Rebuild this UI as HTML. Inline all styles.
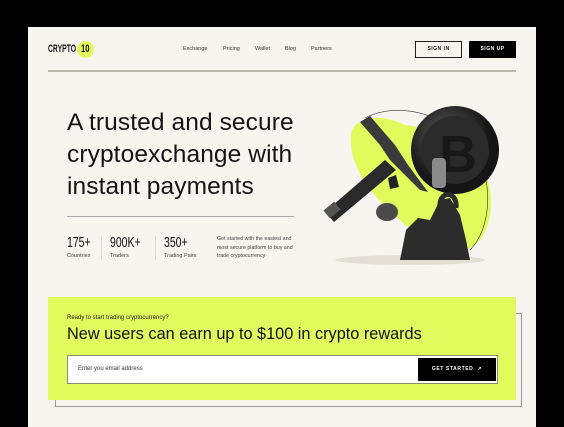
<!DOCTYPE html>
<html><head><style>
*{margin:0;padding:0;box-sizing:border-box}
body{width:564px;height:423px;background:#000;position:relative;overflow:hidden;font-family:"Liberation Sans",sans-serif;color:#111}
.card{position:absolute;left:28px;top:27px;width:508px;height:400px;background:#f7f5f0}
.abs{position:absolute}
.cond{font-family:"Liberation Sans",sans-serif;transform-origin:left;white-space:nowrap}
</style></head><body>
<div class="card"></div>
<div class="abs cond" style="left:48px;top:43px;font-size:11px;font-weight:bold;transform:scaleX(.62)">CRYPTO</div>
<div class="abs" style="left:77px;top:41px;width:17px;height:17px;border-radius:50%;background:#e3fb5f"></div>
<div class="abs cond" style="left:81px;top:43px;font-size:11px;font-weight:bold;transform:scaleX(.7)">10</div>
<div class="abs" style="left:183px;top:46px;font-size:5.5px;color:#333">
<span style="position:absolute;left:0">Exchange</span><span style="position:absolute;left:40px">Pricing</span><span style="position:absolute;left:72px">Wallet</span><span style="position:absolute;left:102px">Blog</span><span style="position:absolute;left:128px">Partners</span></div>
<div class="abs" style="left:415px;top:41px;width:47px;height:17px;border:1px solid #222;font-size:5px;font-weight:bold;text-align:center;line-height:15px;letter-spacing:.5px">SIGN IN</div>
<div class="abs" style="left:469px;top:41px;width:47px;height:17px;background:#000;color:#fff;font-size:5px;font-weight:bold;text-align:center;line-height:17px;letter-spacing:.5px">SIGN UP</div>
<div class="abs" style="left:48px;top:70px;width:468px;height:1.5px;background:#bbb8b0"></div>

<div class="abs" style="left:67px;top:107px;font-size:24.5px;line-height:32px;color:#151515;letter-spacing:.1px">A trusted and secure<br>cryptoexchange with<br>instant payments</div>
<div class="abs" style="left:67px;top:216px;width:227px;height:1px;background:#aaa"></div>

<div class="abs cond" style="left:67px;top:234px;font-size:15px;transform:scaleX(.7)">175+</div>
<div class="abs" style="left:67px;top:253px;font-size:5.5px;color:#444">Countries</div>
<div class="abs" style="left:101px;top:236px;width:1px;height:24px;background:#ddd"></div>
<div class="abs cond" style="left:110px;top:234px;font-size:15px;transform:scaleX(.7)">900K+</div>
<div class="abs" style="left:110px;top:253px;font-size:5.5px;color:#444">Traders</div>
<div class="abs" style="left:155px;top:236px;width:1px;height:24px;background:#ddd"></div>
<div class="abs cond" style="left:164px;top:234px;font-size:15px;transform:scaleX(.7)">350+</div>
<div class="abs" style="left:164px;top:253px;font-size:5.5px;color:#444">Trading Pairs</div>
<div class="abs" style="left:217px;top:235px;font-size:5.3px;line-height:8.7px;color:#444;width:85px">Get started with the easiest and most secure platform to buy and trade cryptocurrency</div>

<svg class="abs" style="left:300px;top:90px" width="220" height="180" viewBox="0 0 220 180">
<defs><radialGradient id="g" cx="40%" cy="35%"><stop offset="0" stop-color="#5a5a5a"/><stop offset="1" stop-color="#151515"/></radialGradient></defs>
<ellipse cx="110" cy="170" rx="75" ry="5" fill="#e2ded6"/>
<path d="M52 40 C60 25 85 25 105 35 C150 40 185 60 190 100 C195 135 180 160 160 160 C130 160 110 140 95 125 C70 105 45 70 52 40Z" fill="#e1fb5c"/>
<path d="M65 28 C100 10 150 25 175 60 C195 95 190 140 170 160" fill="none" stroke="#333" stroke-width=".6"/>
<path d="M60 32 L70 26 L95 55 L108 75 L128 102 L120 100 L90 70 L80 55Z" fill="#3a3a3a"/>
<path d="M25 122 L85 70 L96 80 L34 132Z" fill="#2a2a2a"/>
<rect x="25" y="115" width="14" height="10" transform="rotate(-40 32 120)" fill="#555"/>
<circle cx="155" cy="60" r="44" fill="url(#g)"/>
<circle cx="155" cy="60" r="34" fill="#2a2a2a"/>
<text x="158" y="82" text-anchor="middle" font-size="52" font-weight="bold" fill="#181818">B</text>
<rect x="132" y="68" width="14" height="30" rx="4" fill="#8a8a8a"/>
<path d="M88 88 L96 85 L99 97 L90 99Z" fill="#222"/>
<ellipse cx="87" cy="122" rx="11" ry="9" fill="#4a4a4a"/>
<path d="M100 170 L106 140 L118 128 L130 130 L140 110 L150 108 L160 125 L166 150 L170 170Z" fill="#2c2c2c"/>
<path d="M140 118 C138 100 158 100 156 118" fill="none" stroke="#2c2c2c" stroke-width="5"/>
</svg>

<div class="abs" style="left:55px;top:313px;width:467px;height:94px;border:1px solid #999"></div>
<div class="abs" style="left:48px;top:297px;width:468px;height:103px;background:#e1fb5f"></div>
<div class="abs" style="left:67px;top:315px;font-size:6px;color:#222">Ready to start trading cryptocurrency?</div>
<div class="abs" style="left:67px;top:325px;font-size:16.3px;color:#111">New users can earn up to $100 in crypto rewards</div>
<div class="abs" style="left:67px;top:355px;width:431px;height:29px;background:#fff;border:1px solid #8a8a70"></div>
<div class="abs" style="left:78px;top:366px;font-size:6px;color:#333">Enter you email address</div>
<div class="abs" style="left:418px;top:358px;width:78px;height:23px;background:#000;color:#fff;font-size:5px;font-weight:bold;line-height:23px;text-align:center;letter-spacing:.6px">GET STARTED &nbsp;↗</div>
</body></html>
